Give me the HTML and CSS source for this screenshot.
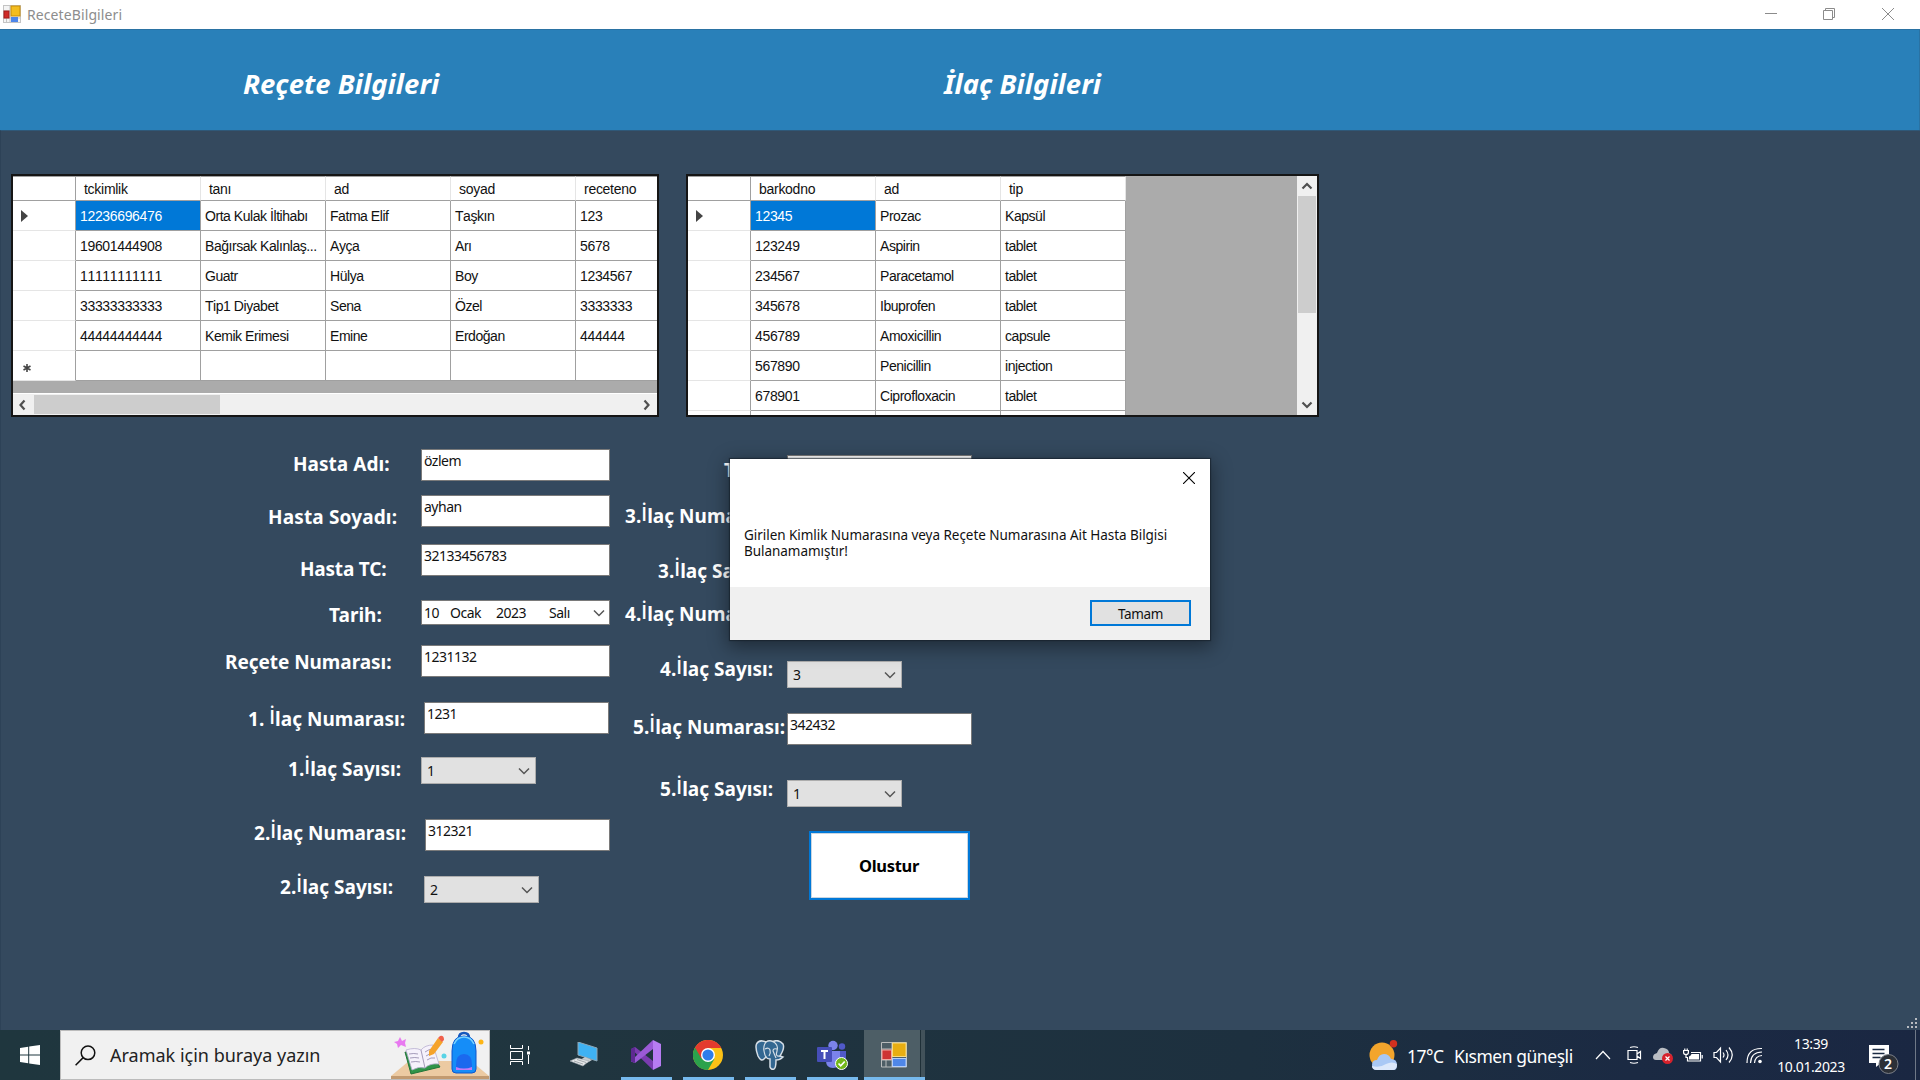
FILE: index.html
```html
<!DOCTYPE html>
<html lang="tr">
<head>
<meta charset="utf-8">
<title>ReceteBilgileri</title>
<link rel="stylesheet" href="styles.css">
</head>
<body>
<div class="window">
  <header class="titlebar">
    <svg class="app-icon" width="18" height="18" viewBox="0 0 18 18"><rect x=".5" y=".5" width="17" height="17" fill="#f4f4f4" stroke="#c4c4c4"/><path d="M7 0v18M0 6h7M0 13h18M3.500 13v5" stroke="#c4c4c4"/><rect x="8" y="1" width="9" height="10" fill="#f3bd1f" stroke="#c98d08"/><rect x="1" y="6" width="5" height="7" fill="#cf2a27" stroke="#a51c1c"/><rect x="8" y="12" width="7" height="5" fill="#4d86ea"/></svg>
    <span class="titlebar-text">ReceteBilgileri</span>
    <svg class="win-controls" width="132" height="14" viewBox="0 0 132 14" fill="none" stroke="#8b8b8b"><path d="M0 6.500h12M58.500 3.500h9v9h-9zM60.500 3.500v-2h9v9h-2M117 1l12 12M129 1l-12 12"/></svg>
  </header>
  <div class="banner">
    <h1>Reçete Bilgileri</h1>
    <h1>İlaç Bilgileri</h1>
  </div>
  <main>
    <section class="grids">
      <div class="datagrid patients">
        <div class="view">
          <table>
            <tr><th></th><th>tckimlik</th><th>tanı</th><th>ad</th><th>soyad</th><th>receteno</th></tr>
            <tr><td><i class="current"></i></td><td class="num selected">12236696476</td><td>Orta Kulak İltihabı</td><td>Fatma Elif</td><td>Taşkın</td><td class="num">123</td></tr>
            <tr><td></td><td class="num">19601444908</td><td>Bağırsak Kalınlaş...</td><td>Ayça</td><td>Arı</td><td class="num">5678</td></tr>
            <tr><td></td><td class="num">11111111111</td><td>Guatr</td><td>Hülya</td><td>Boy</td><td class="num">1234567</td></tr>
            <tr><td></td><td class="num">33333333333</td><td>Tip1 Diyabet</td><td>Sena</td><td>Özel</td><td class="num">3333333</td></tr>
            <tr><td></td><td class="num">44444444444</td><td>Kemik Erimesi</td><td>Emine</td><td>Erdoğan</td><td class="num">444444</td></tr>
            <tr><td><svg class="newrow" width="8" height="8" viewBox="0 0 8 8" stroke="#444" stroke-width="1.600"><path d="M4 0v8M.5 2l7 4M7.500 2l-7 4"/></svg></td><td></td><td></td><td></td><td></td><td></td></tr>
          </table>
        </div>
        <div class="hscroll">
          <svg width="21" height="20" viewBox="0 0 21 20"><path d="M11.500 5.500L7.500 10l4 4.500" /></svg>
          <div class="thumb"></div>
          <svg width="21" height="20" viewBox="0 0 21 20"><path d="M8.500 5.500l4 4.500-4 4.500"/></svg>
        </div>
      </div>
      <div class="datagrid drugs">
        <div class="view">
          <table>
            <tr><th></th><th>barkodno</th><th>ad</th><th>tip</th></tr>
            <tr><td><i class="current"></i></td><td class="num selected">12345</td><td>Prozac</td><td>Kapsül</td></tr>
            <tr><td></td><td class="num">123249</td><td>Aspirin</td><td>tablet</td></tr>
            <tr><td></td><td class="num">234567</td><td>Paracetamol</td><td>tablet</td></tr>
            <tr><td></td><td class="num">345678</td><td>Ibuprofen</td><td>tablet</td></tr>
            <tr><td></td><td class="num">456789</td><td>Amoxicillin</td><td>capsule</td></tr>
            <tr><td></td><td class="num">567890</td><td>Penicillin</td><td>injection</td></tr>
            <tr><td></td><td class="num">678901</td><td>Ciprofloxacin</td><td>tablet</td></tr>
            <tr><td></td><td></td><td></td><td></td></tr>
          </table>
        </div>
        <div class="vscroll">
          <svg width="20" height="20" viewBox="0 0 20 20"><path d="M5.500 12.500l4.500-4.500 4.500 4.500"/></svg>
          <div class="thumb"></div>
          <svg width="20" height="20" viewBox="0 0 20 20"><path d="M5.500 7.500l4.500 4.500 4.500-4.500"/></svg>
        </div>
      </div>
    </section>
    <section class="form">
      <div class="fields left">
        <div class="row name"><label>Hasta Adı:</label><div class="box">özlem</div></div>
        <div class="row surname"><label>Hasta Soyadı:</label><div class="box">ayhan</div></div>
        <div class="row tc"><label>Hasta TC:</label><div class="box">32133456783</div></div>
        <div class="row date"><label>Tarih:</label><div class="box picker"><span>10</span><span>Ocak</span><span>2023</span><span>Salı</span><svg width="12" height="8" viewBox="0 0 12 8"><path d="M1 1.500l5 5 5-5"/></svg></div></div>
        <div class="row recete"><label>Reçete Numarası:</label><div class="box">1231132</div></div>
        <div class="row no1"><label>1. <b>İ</b>laç Numarası:</label><div class="box narrow">1231</div></div>
        <div class="row count1"><label>1.<b>İ</b>laç Sayısı:</label><div class="combo">1<svg width="12" height="8" viewBox="0 0 12 8"><path d="M1 1.500l5 5 5-5"/></svg></div></div>
        <div class="row no2"><label>2.<b>İ</b>laç Numarası:</label><div class="box narrow">312321</div></div>
        <div class="row count2"><label>2.<b>İ</b>laç Sayısı:</label><div class="combo">2<svg width="12" height="8" viewBox="0 0 12 8"><path d="M1 1.500l5 5 5-5"/></svg></div></div>
      </div>
      <div class="fields right">
        <div class="row type"><label>T</label><div class="box narrow"></div></div>
        <div class="row no3"><label>3.<b>İ</b>laç Numarası:</label></div>
        <div class="row count3"><label>3.<b>İ</b>laç Sayısı:</label></div>
        <div class="row no4"><label>4.<b>İ</b>laç Numarası:</label></div>
        <div class="row count4"><label>4.<b>İ</b>laç Sayısı:</label><div class="combo">3<svg width="12" height="8" viewBox="0 0 12 8"><path d="M1 1.500l5 5 5-5"/></svg></div></div>
        <div class="row no5"><label>5.<b>İ</b>laç Numarası:</label><div class="box narrow">342432</div></div>
        <div class="row count5"><label>5.<b>İ</b>laç Sayısı:</label><div class="combo">1<svg width="12" height="8" viewBox="0 0 12 8"><path d="M1 1.500l5 5 5-5"/></svg></div></div>
        <button class="create">Olustur</button>
      </div>
    </section>
    <svg class="grip" width="12" height="12" viewBox="0 0 12 12" fill="#b9bdc2"><path d="M9 1h2v2H9zM9 5h2v2H9zM5 5h2v2H5zM9 9h2v2H9zM5 9h2v2H5zM1 9h2v2H1z"/></svg>
  </main>
  <footer class="taskbar">
    <div class="start"><svg width="20" height="20" viewBox="0 0 20 20" fill="#fff"><path d="M0 2.900L8.200 1.700v7.700H0zM9.200 1.600L20 0v9.400H9.200zM0 10.400h8.200v7.900L0 17.100zM9.200 10.400H20V20L9.200 18.400z"/></svg></div>
    <div class="search">
      <svg width="21" height="21" viewBox="0 0 21 21" fill="none" stroke="#111" stroke-width="1.500"><circle cx="13" cy="7.800" r="6.800"/><path d="M8.200 12.600L.6 20.200"/></svg>
      <span>Aramak için buraya yazın</span>
      <svg class="school" width="98" height="48" viewBox="0 -1 98 48">
        <path d="M0 44L18 29h62l18 15z" fill="#eccaa2"/><path d="M0 44h98v4H0z" fill="#c29a70"/>
        <path d="M9 5l2 4 4-2-1 4 1 4-5-2-3 3-1-4-3-2 4-1z" fill="#e879f0"/>
        <path d="M14 20l6 22 29-7-4-6z" fill="#2f9448" stroke="#227538"/><path d="M15 18q9-3 15 0 4-5 12-5l6 19q-9-1-14 4-6-2-13 2z" fill="#f5f1fb" stroke="#b8aed0" stroke-width=".8"/><path d="M30 18l4 18M18 22q5-1 9 0M19 26q5-1 9 0M20 30q5-1 9 0M34 20q4-3 8-3M35 24q4-3 8-3M36 28q4-3 8-2" fill="none" stroke="#8f85a8" stroke-width=".8"/>
        <path d="M38 19l9-13 5 4-9 12-5 2z" fill="#f5a32a"/><path d="M47 6l2-2q4-1 4 4l-2 2z" fill="#f0604c"/>
        <circle cx="53" cy="24" r="2.500" fill="#58d3e6"/><circle cx="90" cy="10" r="2.500" fill="#fdb515"/>
        <path d="M68 6q0-5 5-5t5 5" fill="none" stroke="#1558bd" stroke-width="2.500"/><path d="M61 19Q61 4 73 4t12 15v18q0 4-4 4H65q-4 0-4-4z" fill="#158df8" stroke="#0f56cc"/><path d="M63 12Q66 5 73 5t10 7" fill="none" stroke="#77d3ff" stroke-width="1.500"/><path d="M65 33q0-11 8-11t8 11v5H65z" fill="#1b69ee"/><path d="M65 35q8 3 16 0v3H65z" fill="#c07bf7"/>
      </svg>
    </div>
    <div class="task view-btn"><svg width="20" height="20" viewBox="0 0 20 20" fill="none" stroke="#fff"><path d="M.5 0v3.500h12V0M.5 6.500h12v8H.5zM.5 20v-3.500h12V20M18.500 1v4M18.500 10v9"/><path d="M17 6.500h3v3h-3z" fill="#fff" stroke="none"/></svg></div>
    <div class="task pc"><svg width="28" height="26" viewBox="0 0 28 26"><path d="M8 0l19 6v13L8 13z" fill="#3fb2f3" stroke="#8fa7b5"/><path d="M15 15l7 3-5 3-7-3z" fill="#c6ccd0"/><path d="M0 19l7-3 12 3-6 5z" fill="#e4e6e8" stroke="#9aa3a9" stroke-width=".6"/><path d="M4 19l9 3M7 17.500l9 3" stroke="#a4aaae"/></svg></div>
    <div class="task open"><svg width="30" height="30" viewBox="0 0 30 30"><path d="M0 9l4-2 18 14V30L4 12.500 4 19 0 22z" fill="#7a3cb0"/><path d="M0 21.500l4 1.500L22 9V0L4 17z" fill="#9a5ad6"/><path d="M0 9l4-2v16l-4-1.500z" fill="#5e2a92"/><path d="M22 0l8 4v22l-8 4z" fill="#b77cf2"/></svg></div>
    <div class="task open"><svg width="30" height="30" viewBox="0 0 30 30"><circle cx="15" cy="15" r="15" fill="#fbc116"/><path d="M15 15L2 7.500A15 15 0 0 0 15 30l6.500-11.300z" fill="#2ba24c"/><path d="M15 8H28.300A15 15 0 0 0 2 7.500l6.500 11.200z" fill="#e33b2e"/><circle cx="15" cy="15" r="7" fill="#fff"/><circle cx="15" cy="15" r="5.600" fill="#2f7de9"/></svg></div>
    <div class="task open"><svg width="30" height="30" viewBox="0 0 30 30"><path d="M11 2Q4-1 1.500 4 0 8 3 16q3 6 6 3l2-2q1 2 4 2v8q1 3 4 2 2-1 2-9 4 0 7-3l-3-1Q30 8 28 4 24-1 18 1.500 14 0 11 2z" fill="#336791" stroke="#d5dee6" stroke-width="1.500"/><path d="M11 2Q8 6 9 11t2 6M18 1.500Q24 5 22 11t3 5M10 9q4-2 5 1t-1 6M22 9q-4-1-4 2l3 7" fill="none" stroke="#d5dee6" stroke-width="1.200"/></svg></div>
    <div class="task open"><svg width="31" height="30" viewBox="0 0 31 30"><circle cx="16" cy="5.500" r="4.700" fill="#7b83eb"/><circle cx="25" cy="6.500" r="3.200" fill="#5059c9"/><path d="M20 11h9v8q0 6-7 6z" fill="#5059c9"/><path d="M9 11h14v10q0 7-7 7t-7-7z" fill="#7b83eb"/><rect y="7" width="15" height="15" rx="1" fill="#464eb8"/><path d="M4 11h7M7.500 11v8" stroke="#fff" stroke-width="2"/><circle cx="24.500" cy="23.500" r="6" fill="#72b71a" stroke="#fff"/><path d="M21.500 23.500l2.200 2.300 4-4.300" fill="none" stroke="#fff" stroke-width="1.700"/></svg></div>
    <div class="task open active"><svg width="26" height="26" viewBox="0 0 26 26"><path d="M.5.500h25v24.500H.5zM11 0v25M0 7h11M0 18h25M5 18v7" fill="none" stroke="#b9bcbc"/><rect x="11.500" y="1" width="13.500" height="13.500" fill="#e8ae12" stroke="#f8dc83"/><rect x="1" y="8" width="9.500" height="9.500" fill="#ce3432" stroke="#f0a9a0"/><rect x="11.500" y="16.500" width="13.500" height="8" fill="#4f87e8" stroke="#b5cffa"/></svg></div>
    <div class="tray">
      <svg class="weather" width="29" height="30" viewBox="0 0 29 30"><circle cx="13" cy="15" r="12.500" fill="#f3a52c"/><circle cx="24.500" cy="3.700" r="3.700" fill="#d3301f"/><path d="M8 30q-5 0-5-5t5-5q2-6 7-6t7 5q6 0 6 6t-5 5z"/><path d="M8 30q-5 0-5-4 8 2 14-2 6-3 11 0 0 6-5 6z"/></svg>
      <span class="temp">17°C</span>
      <span class="cond">Kısmen güneşli</span>
      <svg class="chev" width="16" height="10" viewBox="0 0 16 10"><path d="M1 9l7-7.500L15 9"/></svg>
      <svg class="meet" width="15" height="18" viewBox="0 0 15 18"><path d="M1 4.500h9v9H1zM10 8l3.500-2.500v7L10 10M3 1.500q4-1.500 8 0M3 16.500q4 1.500 8 0"/></svg>
      <svg class="cloud" width="20" height="17" viewBox="0 0 20 17"><path d="M3 13q-3 0-3-3t4-4q2-6 7-5t5 5q3 1 3 4t-4 3z"/><circle cx="14.500" cy="11.500" r="5.500" fill="#d6222c"/><path d="M12.500 9.500l4 4M16.500 9.500l-4 4"/></svg>
      <svg class="batt" width="20" height="15" viewBox="0 0 20 15"><path d="M8 4.500h9.500v8.500H4.500V9.500M19.200 7v3.500M3 6.500v3h2M.6 2.500h4.800v2q0 2-2.400 2T.6 4.500zM1.800.5v2M4.200.5v2"/><path d="M8.500 6H16v5.500H6V8.500q2-1 2.500-2.500z"/></svg>
      <svg class="sound" width="21" height="18" viewBox="0 0 21 18"><path d="M1 6.500h2.500L7.500 2v14L3.500 11.500H1zM10 6.500q2 2.500 0 5M13 4q4 5 0 10M16 1.500q6.500 7.500 0 15"/></svg>
      <svg class="wifi" width="17" height="17" viewBox="0 0 17 17"><path d="M1 16Q1 1 16 1.500M4.500 16Q5 5 16 5M8.500 16Q9 9 16 8.500"/><circle cx="14" cy="14.500" r="1.800" fill="#fff"/></svg>
      <div class="clock"><span>13:39</span><span>10.01.2023</span></div>
      <div class="notif"><svg width="30" height="32" viewBox="0 0 30 32"><path d="M0 0h20v18h-8l-5 4v-4H0z"/><path d="M3.500 4.500h12M3.500 8.500h12M3.500 12.500h8"/><circle cx="19.500" cy="19" r="9.500" fill="#2c3037" stroke="#7b8088"/></svg><span>2</span></div>
      <div class="peek"></div>
    </div>
  </footer>
</div>
<div class="dialog">
  <div class="dialog-body">
    <svg width="12" height="12" viewBox="0 0 12 12" stroke="#000" stroke-width="1.100"><path d="M0 0l12 12M12 0L0 12"/></svg>
    <p>Girilen Kimlik Numarasına veya Reçete Numarasına Ait Hasta Bilgisi<br>Bulanamamıştır!</p>
  </div>
  <div class="dialog-foot"><button>Tamam</button></div>
</div>
</body>
</html>
```
FILE: styles.css
```css
* { box-sizing: border-box; }
body { margin: 0; width: 1920px; height: 1080px; overflow: hidden; font-family: "Noto Sans", "Open Sans", sans-serif; }
.window { display: flex; flex-direction: column; height: 1080px; }
svg { display: block; flex: none; }

.titlebar { height: 29px; display: flex; align-items: center; background: #fff; color: #8d8d8d; padding: 0 23px 1px 3px; }
.titlebar-text { margin-left: 6px; font-size: 14px; letter-spacing: 0.1px; }
.win-controls { margin-left: auto; }

.banner { height: 101px; display: grid; grid-template-columns: 701px 1fr; padding: 34px 0 0 243px; background: #2980b9; border: 1px solid #2a72a3; border-left: 0; border-bottom: 0; }
.banner h1 { margin: 0; font-size: 27.500px; line-height: 40px; font-style: italic; font-weight: 700; color: #fff; white-space: nowrap; }

main { height: 900px; background: #34495e; padding-top: 43px; display: flex; flex-direction: column; border-left: 1px solid #2d4257; border-top: 1px solid #2f5878; }
.grids { display: flex; gap: 27px; padding-left: 10px; }
.datagrid { height: 243px; border: 2px solid #151515; background: #ababab; overflow: hidden; display: flex; }
.patients { width: 648px; flex-direction: column; }
.drugs { width: 633px; }
.view { flex: 1; overflow: hidden; }
table { border-collapse: separate; border-spacing: 0; table-layout: fixed; font: 14px/16px "Liberation Sans", Arial, sans-serif; font-kerning: none; color: #111; }
.patients table { width: 688px; }
.drugs table { width: 438px; }
th, td { width: 125px; height: 30px; padding: 1px 0 0 4px; background: #fff; border-right: 1px solid #a0a0a0; border-bottom: 1px solid #a0a0a0; font-weight: 400; text-align: left; white-space: nowrap; letter-spacing: -0.45px; }
th { height: 25px; padding: 0 0 0 8px; border-top: 1px solid #a0a0a0; border-right-color: #e5e5e5; letter-spacing: -0.28px; }
th:first-child, td:first-child { width: 63px; border-right-color: #a0a0a0; }
td:first-child { border-bottom-color: #e5e5e5; padding-left: 8px; }
td.num { letter-spacing: -0.34px; }
td.selected { background: #0078d7; color: #fff; }
.current { display: block; width: 0; border: 6px solid transparent; border-left: 7px solid #444; border-right: 0; }
.newrow { margin: 3px 0 0 2px; }
.hscroll { height: 22px; border-top: 1px solid #fff; background: #f0f0f0; display: flex; align-items: center; }
.hscroll .thumb { width: 186px; height: 19px; margin-right: auto; background: #cdcdcd; }
.vscroll { width: 20px; background: #f0f0f0; display: flex; flex-direction: column; align-items: center; }
.vscroll .thumb { width: 18px; height: 117px; margin-bottom: auto; background: #cdcdcd; }
.hscroll path, .vscroll path { fill: none; stroke: #505050; stroke-width: 2.200; }

.form { display: flex; padding: 22px 0 0 199px; }
.fields { display: grid; width: 420px; align-content: start; }
.left { grid-template-rows: 46px 49px 56px 45px 57px 55px 62px 57px 40px; }
.right { grid-template-rows: 45px 60px 46px 55px 52px 67px 51px 80px; padding-top: 6px; }
.row { display: grid; grid-template-columns: 221px auto; justify-content: start; align-items: start; }
.right .row { grid-template-columns: 167px auto; }
label { padding-top: 1px; font-size: 19px; line-height: 24px; font-weight: 700; color: #fff; white-space: nowrap; letter-spacing: 0.03px; }
label b { font-family: "Open Sans", sans-serif; font-weight: 600; font-size: 19px; line-height: 20px; vertical-align: 2px; }
.box { margin-top: 10px; width: 189px; height: 32px; padding: 2px 0 0 2px; background: #fff; border: 1px solid #7a7a7a; font-size: 14px; line-height: 18px; color: #111; letter-spacing: -0.5px; }
.box.narrow { width: 185px; }
.combo { margin-top: 10px; width: 115px; height: 27px; padding: 0 5px 0 5px; background: #e1e1e1; border: 1px solid #adadad; display: flex; align-items: center; justify-content: space-between; font-size: 14px; color: #111; }
.combo path, .picker path { fill: none; stroke: #555; stroke-width: 1.500; }
.picker { height: 25px; display: flex; align-items: center; padding: 0 4px 0 2px; }
.picker span { margin-right: 11px; }
.picker span:nth-child(2) { margin-right: 15px; }
.picker span:nth-child(3) { margin-right: 23px; }
.picker span:nth-child(4) { margin-right: 0; }
.picker svg { margin-left: auto; }
.name label { margin: 12px 0 0 93px; }
.surname label { margin: 19px 0 0 68px; letter-spacing: 0.15px; }
.tc label { margin: 22px 0 0 100px; letter-spacing: -0.2px; }
.date label { margin: 12px 0 0 129px; }
.recete label { margin: 14px 0 0 25px; letter-spacing: -0.05px; }
.no1 label { margin: 14px 0 0 48px; }
.no1 .box { margin-left: 3px; }
.count1 label { margin: 9px 0 0 88px; }
.no2 label { margin: 11px 0 0 54px; }
.no2 .box { margin-left: 4px; }
.count2 label { margin: 8px 0 0 80px; }
.count2 .combo { margin-left: 3px; }
.type label { margin: 12px 0 0 104px; }
.no3 label { margin: 13px 0 0 5px; }
.count3 label { margin: 8px 0 0 38px; }
.no4 label { margin: 5px 0 0 5px; }
.count4 label { margin: 5px 0 0 40px; }
.no5 label { margin: 11px 0 0 13px; }
.count5 label { margin: 6px 0 0 40px; }
.create { margin: 10px 0 0 189px; padding: 0 1px 0 0; width: 161px; height: 69px; background: #fff; border: 2px solid #0078d7; box-shadow: inset 0 0 0 1px #c9d5e0; font: 700 16.500px "Noto Sans", sans-serif; color: #000; letter-spacing: -0.3px; }
.grip { margin: auto 2px 1px auto; }

.taskbar { height: 50px; display: flex; background: linear-gradient(90deg, #1f363e 0, #20353f 30%, #1d303f 65%, #1b2a43 85%, #1a2742 100%); color: #fff; }
.start { width: 60px; display: grid; place-items: center; }
.search { width: 430px; display: flex; align-items: center; background: #f1f1f1; border: 1px solid #bcbcbc; padding-left: 14px; font-size: 18px; color: #222; }
.search > span { margin-left: 14px; white-space: nowrap; }
.school { margin-left: auto; }
.task { width: 62px; height: 50px; display: grid; place-items: center; }
.view-btn { padding-right: 2px; }
.pc { padding-left: 2px; }
.task.open { width: 51px; margin-right: 11px; border-bottom: 3px solid #76b9ed; padding: 3px 1px 0 0; }
.task.open:nth-child(5) { margin-left: 7px; }
.task.open:nth-child(8) { margin-right: 6px; }
.task.open.active { width: 61px; margin: 0; background: linear-gradient(90deg, #4d5e66 56px, #1f3038 56px, #1f3038 57px, #42525a 57px); padding-right: 2px; }
.tray { flex: 1; display: flex; align-items: center; padding-left: 444px; }
.tray path { fill: none; stroke: #fff; stroke-width: 1.200; }
.tray .weather path:nth-of-type(1) { fill: #a9c8f5; stroke: none; }
.tray .weather path:nth-of-type(2) { fill: #dce8fb; stroke: none; }
.tray .cloud path:nth-of-type(1) { fill: #b9bdc3; stroke: none; }
.tray .batt path:nth-of-type(2) { fill: #fff; stroke: none; }
.tray .notif path:nth-of-type(1) { fill: #fff; stroke: none; }
.tray .notif path:nth-of-type(2) { stroke: #1b2b43; stroke-width: 1.500; }
.temp, .cond { padding-top: 2px; font-size: 17.500px; white-space: nowrap; }
.temp { margin-left: 9px; width: 47px; letter-spacing: -0.5px; }
.cond { width: 141px; letter-spacing: -0.45px; }
.meet { margin-left: 16px; }
.cloud { margin-left: 11px; }
.batt { margin-left: 10px; }
.sound { margin-left: 10px; }
.wifi { margin-left: 12px; }
.clock { width: 96px; padding-bottom: 1px; display: flex; flex-direction: column; align-items: center; font-size: 14px; line-height: 23px; letter-spacing: -0.4px; }
.notif { position: relative; margin: 12px 0 0 10px; }
.notif span { position: absolute; left: 15px; top: 9px; font-size: 14px; line-height: 20px; font-weight: 600; }
.peek { width: 1px; height: 50px; margin-left: 16px; background: #6f7887; }

.dialog { position: absolute; left: 730px; top: 459px; width: 480px; height: 181px; background: #fff; box-shadow: 0 0 1px 1px rgba(20,30,40,.6), 0 5px 18px 2px rgba(0,0,0,.42); display: flex; flex-direction: column; }
.dialog-body { height: 128px; padding: 13px 15px 0 14px; font-size: 13.500px; line-height: 16px; color: #111; }
.dialog-body svg { margin-left: auto; }
.dialog-body p { margin: 43px 0 0; white-space: nowrap; letter-spacing: -0.04px; }
.dialog-foot { flex: 1; background: #f0f0f0; padding: 13px 19px 0 0; display: flex; justify-content: flex-end; align-items: flex-start; }
.dialog-foot button { width: 101px; height: 26px; padding: 1px 0 0; background: #e1e1e1; border: 2px solid #0078d7; font: 13.500px "Noto Sans", sans-serif; color: #111; letter-spacing: -0.4px; }
```
